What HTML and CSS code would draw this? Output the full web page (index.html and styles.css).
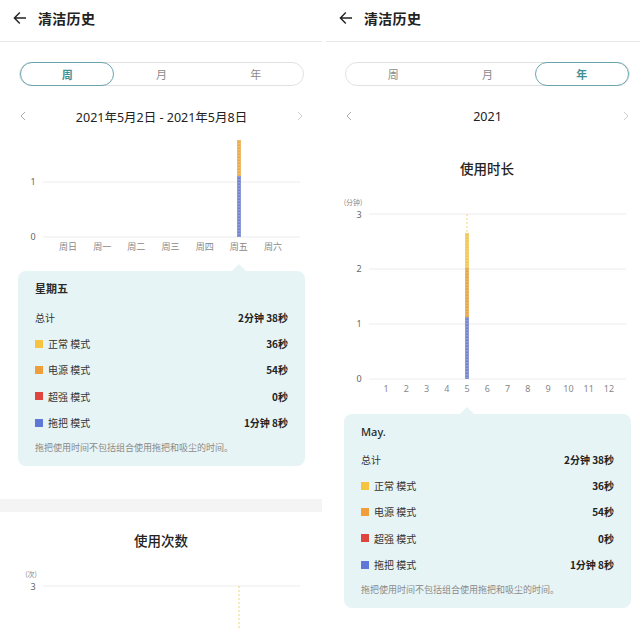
FILE: index.html
```html
<!DOCTYPE html>
<html lang="zh-CN">
<head>
<meta charset="utf-8">
<title>清洁历史</title>
<link rel="stylesheet" href="styles.css">
</head>
<body>
<div class="screens">
  <!-- Left: week -->
  <section class="panel">
    <header class="topbar">
      <svg class="back" width="14" height="14" viewBox="0 0 14 14"><path d="M13 7H1.5M6.8 1.6L1.4 7l5.4 5.4" fill="none" stroke="#222" stroke-width="1.4"/></svg>
      <h1 class="title">清洁历史</h1>
    </header>
    <div class="seg-wrap">
      <div class="seg">
        <span class="seg-item active">周</span>
        <span class="seg-item">月</span>
        <span class="seg-item">年</span>
      </div>
    </div>
    <div class="nav">
      <svg class="chev" width="6" height="10" viewBox="0 0 6 10"><path d="M5 1L1 5l4 4" fill="none" stroke="#aaa" stroke-width="1"/></svg>
      <span class="nav-text">2021年5月2日 - 2021年5月8日</span>
      <svg class="chev" width="6" height="10" viewBox="0 0 6 10"><path d="M1 1l4 4-4 4" fill="none" stroke="#ccc" stroke-width="1"/></svg>
    </div>
    <svg class="chart chart-week" width="322" height="130" viewBox="0 0 322 130">
      <line x1="43" y1="51" x2="300" y2="51" class="grid"/>
      <line x1="43" y1="106" x2="300" y2="106" class="grid"/>
      <text x="33" y="54" class="ylab" text-anchor="middle">1</text>
      <text x="33" y="109" class="ylab" text-anchor="middle">0</text>
      <rect x="237.2" y="9" width="3.6" height="36" fill="#eaa944"/>
      <rect x="237.2" y="45" width="3.6" height="61" fill="#6f82cc"/>
      <line x1="239" y1="9" x2="239" y2="106" stroke="#fff" stroke-opacity="0.6" stroke-width="0.8" stroke-dasharray="1.5 1.5"/>
      <text x="68" y="119" class="xlab" text-anchor="middle">周日</text>
      <text x="102.2" y="119" class="xlab" text-anchor="middle">周一</text>
      <text x="136.3" y="119" class="xlab" text-anchor="middle">周二</text>
      <text x="170.5" y="119" class="xlab" text-anchor="middle">周三</text>
      <text x="204.7" y="119" class="xlab" text-anchor="middle">周四</text>
      <text x="238.8" y="119" class="xlab" text-anchor="middle">周五</text>
      <text x="273" y="119" class="xlab" text-anchor="middle">周六</text>
    </svg>
    <div class="card card-left">
      <div class="card-title">星期五</div>
      <div class="row"><span class="lab">总计</span><span class="val">2分钟 38秒</span></div>
      <div class="row"><span class="lab"><i class="sw sw-yellow"></i>正常 模式</span><span class="val">36秒</span></div>
      <div class="row"><span class="lab"><i class="sw sw-orange"></i>电源 模式</span><span class="val">54秒</span></div>
      <div class="row"><span class="lab"><i class="sw sw-red"></i>超强 模式</span><span class="val">0秒</span></div>
      <div class="row"><span class="lab"><i class="sw sw-blue"></i>拖把 模式</span><span class="val">1分钟 8秒</span></div>
      <div class="note">拖把使用时间不包括组合使用拖把和吸尘的时间。</div>
    </div>
    <div class="band"></div>
    <h2 class="section-title">使用次数</h2>
    <svg class="chart" width="322" height="80" viewBox="0 0 322 80">
      <text x="31" y="27" class="unit" text-anchor="middle">(次)</text>
      <line x1="43" y1="36" x2="300" y2="36" class="grid"/>
      <text x="33" y="39.5" class="ylab" text-anchor="middle">3</text>
      <line x1="239" y1="36" x2="239" y2="80" stroke="#f0c850" stroke-width="0.8" stroke-dasharray="2 2"/>
    </svg>
  </section>

  <!-- Right: year -->
  <section class="panel">
    <header class="topbar">
      <svg class="back" width="14" height="14" viewBox="0 0 14 14"><path d="M13 7H1.5M6.8 1.6L1.4 7l5.4 5.4" fill="none" stroke="#222" stroke-width="1.4"/></svg>
      <h1 class="title">清洁历史</h1>
    </header>
    <div class="seg-wrap">
      <div class="seg">
        <span class="seg-item">周</span>
        <span class="seg-item">月</span>
        <span class="seg-item active">年</span>
      </div>
    </div>
    <div class="nav">
      <svg class="chev" width="6" height="10" viewBox="0 0 6 10"><path d="M5 1L1 5l4 4" fill="none" stroke="#aaa" stroke-width="1"/></svg>
      <span class="nav-text">2021</span>
      <svg class="chev" width="6" height="10" viewBox="0 0 6 10"><path d="M1 1l4 4-4 4" fill="none" stroke="#ccc" stroke-width="1"/></svg>
    </div>
    <h2 class="section-title st-top">使用时长</h2>
    <svg class="chart" width="322" height="226" viewBox="0 0 322 226">
      <text x="27" y="27" class="unit" text-anchor="middle">(分钟)</text>
      <line x1="43" y1="36" x2="300" y2="36" class="grid"/>
      <line x1="43" y1="91" x2="300" y2="91" class="grid"/>
      <line x1="43" y1="146" x2="300" y2="146" class="grid"/>
      <line x1="43" y1="201" x2="300" y2="201" class="grid"/>
      <text x="33" y="39.5" class="ylab" text-anchor="middle">3</text>
      <text x="33" y="94" class="ylab" text-anchor="middle">2</text>
      <text x="33" y="149" class="ylab" text-anchor="middle">1</text>
      <text x="33" y="204" class="ylab" text-anchor="middle">0</text>
      <line x1="141" y1="36" x2="141" y2="55" stroke="#f0c850" stroke-width="0.8" stroke-dasharray="2 2"/>
      <rect x="139.2" y="55" width="3.6" height="35" fill="#f1c54e"/>
      <rect x="139.2" y="90" width="3.6" height="49" fill="#e4a43f"/>
      <rect x="139.2" y="139" width="3.6" height="62" fill="#6f82cc"/>
      <line x1="141" y1="55" x2="141" y2="201" stroke="#fff" stroke-opacity="0.6" stroke-width="0.8" stroke-dasharray="1.5 1.5"/>
      <text x="60" y="214" class="xlab" text-anchor="middle">1</text>
      <text x="80.3" y="214" class="xlab" text-anchor="middle">2</text>
      <text x="100.5" y="214" class="xlab" text-anchor="middle">3</text>
      <text x="120.8" y="214" class="xlab" text-anchor="middle">4</text>
      <text x="141.1" y="214" class="xlab" text-anchor="middle">5</text>
      <text x="161.4" y="214" class="xlab" text-anchor="middle">6</text>
      <text x="181.6" y="214" class="xlab" text-anchor="middle">7</text>
      <text x="201.9" y="214" class="xlab" text-anchor="middle">8</text>
      <text x="222.2" y="214" class="xlab" text-anchor="middle">9</text>
      <text x="242.4" y="214" class="xlab" text-anchor="middle">10</text>
      <text x="262.7" y="214" class="xlab" text-anchor="middle">11</text>
      <text x="283" y="214" class="xlab" text-anchor="middle">12</text>
    </svg>
    <div class="card card-right">
      <div class="card-title">May.</div>
      <div class="row"><span class="lab">总计</span><span class="val">2分钟 38秒</span></div>
      <div class="row"><span class="lab"><i class="sw sw-yellow"></i>正常 模式</span><span class="val">36秒</span></div>
      <div class="row"><span class="lab"><i class="sw sw-orange"></i>电源 模式</span><span class="val">54秒</span></div>
      <div class="row"><span class="lab"><i class="sw sw-red"></i>超强 模式</span><span class="val">0秒</span></div>
      <div class="row"><span class="lab"><i class="sw sw-blue"></i>拖把 模式</span><span class="val">1分钟 8秒</span></div>
      <div class="note">拖把使用时间不包括组合使用拖把和吸尘的时间。</div>
    </div>
  </section>
</div>
</body>
</html>
```
FILE: styles.css
```css
* { box-sizing: border-box; }
html, body {
  margin: 0;
  padding: 0;
  background: #fff;
  width: 640px;
  height: 630px;
  overflow: hidden;
  font-family: "Noto Sans", "Noto Sans CJK SC", sans-serif;
  color: #222;
}
.screens {
  display: flex;
  gap: 4px;
  width: 648px;
}
.panel {
  flex: 0 0 322px;
  width: 322px;
  display: flex;
  flex-direction: column;
  overflow: hidden;
}
.topbar {
  height: 42px;
  border-bottom: 1px solid #e6e6e6;
  display: flex;
  align-items: center;
  padding: 0 0 5px 13px;
  gap: 11px;
}
.back { display: block; }
.title {
  margin: 0;
  font-size: 14px;
  font-weight: 600;
  line-height: 20px;
  font-family: "Noto Sans CJK SC", sans-serif;
  letter-spacing: 0.3px;
}
.seg-wrap {
  margin-top: 20px;
  padding: 0 18px 0 19px;
}
.seg {
  height: 24px;
  border: 1px solid #e2e2e2;
  border-radius: 12px;
  display: grid;
  grid-template-columns: 1fr 1fr 1fr;
}
.seg-item {
  display: flex;
  align-items: center;
  justify-content: center;
  font-size: 11px;
  color: #8a8a8a;
  font-family: "Noto Sans CJK SC", sans-serif;
  border-radius: 12px;
  margin: -1px 0;
}
.seg-item.active {
  border: 1px solid #6aa5ad;
  color: #3f8f99;
  font-weight: 600;
}
.nav {
  margin-top: 15px;
  height: 30px;
  display: flex;
  align-items: center;
  justify-content: space-between;
  padding: 0 19px 0 20px;
}
.chev { display: block; }
.nav-text {
  font-size: 12.5px;
  color: #222;
  font-family: "Noto Sans", "Noto Sans CJK SC", sans-serif;
}
.chart { display: block; }
.grid { stroke: #ececec; stroke-width: 1; }
.ylab {
  font-size: 9px;
  fill: #666;
  font-family: "Noto Sans", sans-serif;
}
.xlab {
  font-size: 9px;
  fill: #888;
  font-family: "Noto Sans", "Noto Sans CJK SC", sans-serif;
}
.unit {
  font-size: 7px;
  fill: #888;
  font-family: "Noto Sans CJK SC", sans-serif;
}
.card {
  position: relative;
  margin: 10px 17px 0 18px;
  background: #e7f4f5;
  border-radius: 8px;
  padding: 10px 17px 11px 17px;
}
.card::before {
  content: "";
  position: absolute;
  top: -7px;
  width: 0;
  height: 0;
  border-left: 7px solid transparent;
  border-right: 7px solid transparent;
  border-bottom: 7px solid #e7f4f5;
}
.card-left::before { left: 214px; }
.card-right::before { left: 116px; }
.card-title {
  font-size: 11px;
  line-height: 16px;
  font-weight: 600;
  color: #2a2a2a;
  margin-bottom: 7px;
  font-family: "Noto Sans", "Noto Sans CJK SC", sans-serif;
}
.card-right .card-title { font-weight: 500; margin-bottom: 6px; }
.row {
  height: 26.4px;
  display: flex;
  align-items: center;
  justify-content: space-between;
  font-size: 10px;
  font-family: "Noto Sans CJK SC", sans-serif;
}
.lab {
  display: flex;
  align-items: center;
  color: #333;
}
.val {
  font-weight: 600;
  color: #222;
}
.sw {
  display: inline-block;
  width: 8px;
  height: 8px;
  margin-right: 5px;
}
.sw-yellow { background: #f5c542; }
.sw-orange { background: #f09e3a; }
.sw-red { background: #e0443f; }
.sw-blue { background: #5f78d8; }
.note {
  margin-top: 5px;
  font-size: 9px;
  line-height: 14px;
  color: #8a8a8a;
  font-family: "Noto Sans CJK SC", sans-serif;
}
.band {
  margin-top: 33px;
  height: 13px;
  background: #f4f4f4;
}
.section-title {
  margin: 18px 0 0 0;
  text-align: center;
  font-size: 13.5px;
  line-height: 20px;
  font-weight: 500;
  color: #222;
  font-family: "Noto Sans CJK SC", sans-serif;
}
.st-top { margin-top: 27px; }
```
